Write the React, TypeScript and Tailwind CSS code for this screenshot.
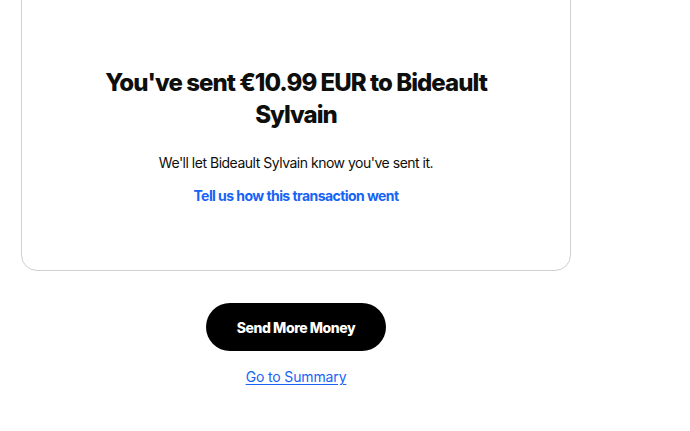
export default function App() {
  return (
    <main className="min-h-screen bg-white font-['Inter',sans-serif] text-[#0e0f0c]">
      <div className="w-[550px] ml-[21px] flex flex-col items-center">
        {/* success card, scrolled so its top is above the fold */}
        <div className="w-full -mt-5 rounded-2xl border border-[#d0d0d0] flex flex-col items-center pt-[86px] pb-[64px]">
          <h1 className="max-w-[400px] text-center text-[24px] leading-[32px] font-extrabold tracking-[-0.04em]">
            You've sent €10.99 EUR to Bideault Sylvain
          </h1>
          <p className="mt-[22px] text-[14px] leading-[20px] tracking-[-0.035em]">
            We'll let Bideault Sylvain know you've sent it.
          </p>
          <a href="#" className="mt-[13px] text-[14px] leading-[20px] font-bold tracking-[-0.04em] text-[#1663f5]">
            Tell us how this transaction went
          </a>
        </div>

        <button className="mt-[32px] h-[48px] w-[180px] rounded-full bg-black text-white text-[14px] font-extrabold tracking-[-0.03em]">
          Send More Money
        </button>
        <a href="#" className="mt-[16px] text-[14px] leading-[20px] tracking-[-0.01em] text-[#1663f5] underline underline-offset-2">
          Go to Summary
        </a>
      </div>
    </main>
  )
}
